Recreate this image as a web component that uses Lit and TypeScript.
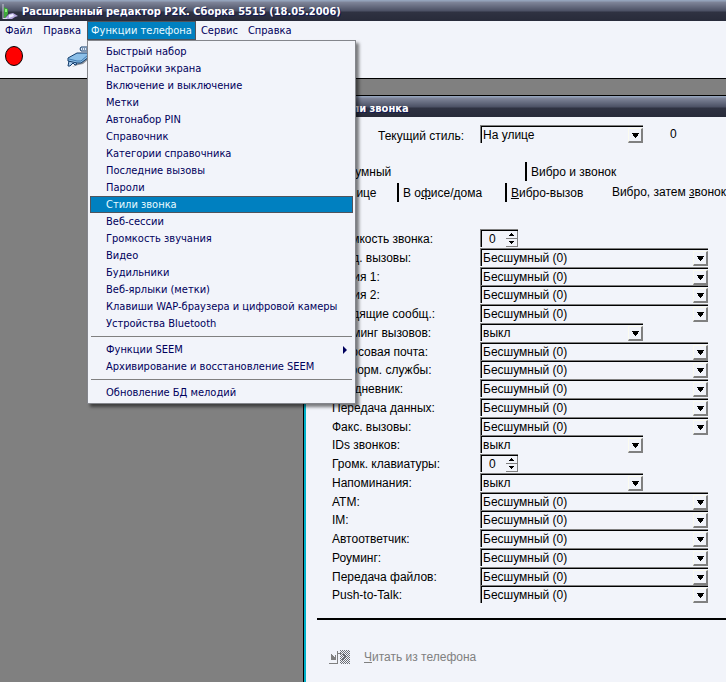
import { LitElement, html, css, nothing } from "lit";
import { customElement, property } from "lit/decorators.js";

type Row = { label: string; kind: "wide" | "short" | "spin" };

const SILENT = "Бесшумный (0)";

const ROWS: Row[] = [
  { label: "Громкость звонка:", kind: "spin" },
  { label: "Вход. вызовы:", kind: "wide" },
  { label: "Линия 1:", kind: "wide" },
  { label: "Линия 2:", kind: "wide" },
  { label: "Входящие сообщ.:", kind: "wide" },
  { label: "Тайминг вызовов:", kind: "short" },
  { label: "Голосовая почта:", kind: "wide" },
  { label: "Информ. службы:", kind: "wide" },
  { label: "Ежедневник:", kind: "wide" },
  { label: "Передача данных:", kind: "wide" },
  { label: "Факс. вызовы:", kind: "wide" },
  { label: "IDs звонков:", kind: "short" },
  { label: "Громк. клавиатуры:", kind: "spin" },
  { label: "Напоминания:", kind: "short" },
  { label: "ATM:", kind: "wide" },
  { label: "IM:", kind: "wide" },
  { label: "Автоответчик:", kind: "wide" },
  { label: "Роуминг:", kind: "wide" },
  { label: "Передача файлов:", kind: "wide" },
  { label: "Push-to-Talk:", kind: "wide" },
];

const MENU: (string | null)[] = [
  "Быстрый набор",
  "Настройки экрана",
  "Включение и выключение",
  "Метки",
  "Автонабор PIN",
  "Справочник",
  "Категории справочника",
  "Последние вызовы",
  "Пароли",
  "Стили звонка",
  "Веб-сессии",
  "Громкость звучания",
  "Видео",
  "Будильники",
  "Веб-ярлыки (метки)",
  "Клавиши WAP-браузера и цифровой камеры",
  "Устройства Bluetooth",
  null,
  "Функции SEEM",
  "Архивирование и восстановление SEEM",
  null,
  "Обновление БД мелодий",
];

@customElement("combo-box")
class ComboBox extends LitElement {
  @property() value = "";
  @property() label = "";

  static styles = css`
    :host {
      display: grid;
      height: 18px;
      box-sizing: border-box;
      border-top: 1px solid #808080;
      border-left: 1px solid #808080;
    }
    .field,
    .arrow {
      grid-area: 1 / 1;
    }
    .field {
      appearance: none;
      width: 100%;
      min-width: 0;
      height: 17px;
      margin: 0;
      padding: 0 18px 0 1px;
      border: 0 solid #000;
      border-width: 1px 0 0 1px;
      border-radius: 0;
      outline: 0;
      background: #f2f4fa;
      color: #000;
      font: 12px/16px "Liberation Sans", sans-serif;
    }
    .arrow {
      justify-self: end;
      align-self: end;
      width: 15px;
      height: 15px;
      box-sizing: border-box;
      border: 1px solid #fbfbf0;
      border-right: 2px solid #808080;
      border-bottom: 2px solid #808080;
      pointer-events: none;
    }
    .glyph {
      display: block;
    }
  `;

  render() {
    return html`
      <select class="field" aria-label=${this.label}>
        <option>${this.value}</option>
      </select>
      <span class="arrow">
        <svg class="glyph" width="12" height="12" shape-rendering="crispEdges">
          <path d="M3 4h7v1h-1v2h-1v1h-1v1h-1v-1h-1v-1h-1v-2h-1z" fill="#000" />
        </svg>
      </span>
    `;
  }
}

@customElement("spin-box")
class SpinBox extends LitElement {
  @property() label = "";

  static styles = css`
    :host {
      display: flex;
      height: 18px;
      box-sizing: border-box;
      border-top: 1px solid #808080;
      border-left: 1px solid #808080;
    }
    .value {
      flex: 1;
      min-width: 0;
      box-sizing: border-box;
      padding: 0 0 0 7px;
      border: 0 solid #000;
      border-width: 1px 0 0 1px;
      border-radius: 0;
      outline: 0;
      background: #f2f4fa;
      color: #000;
      font: 12px/16px "Liberation Sans", sans-serif;
    }
    .steps {
      display: flex;
      flex-direction: column;
      width: 12px;
      border-top: 1px solid #000;
    }
    .step {
      flex: 1;
      display: flex;
      align-items: center;
      justify-content: center;
      padding: 0;
      border: 0 solid #808080;
      border-width: 0 1px 1px 0;
      background: #f2f4fa;
    }
  `;

  render() {
    const step = (name: string, d: string) => html`
      <button class="step" aria-label=${name}>
        <svg width="5" height="3" shape-rendering="crispEdges"><path d=${d} /></svg>
      </button>
    `;
    return html`
      <input class="value" value="0" aria-label=${this.label} />
      <span class="steps">
        ${step("Больше", "M2 0h1v1h1v1h1v1h-5v-1h1v-1h1z")}
        ${step("Меньше", "M0 0h5v1h-1v1h-1v1h-1v-1h-1v-1h-1z")}
      </span>
    `;
  }
}

@customElement("app-root")
class AppRoot extends LitElement {
  static styles = css`
    :host {
      display: flex;
      flex-direction: column;
      min-height: 100vh;
      overflow: hidden;
      background: #808080;
      color: #000;
      font: 12px/16px "Liberation Sans", sans-serif;
    }
    .caption {
      display: flex;
      align-items: center;
      gap: 4px;
      box-sizing: border-box;
      height: 21px;
      padding: 2px 2px 0;
      background: linear-gradient(#94a3bb 0 1px, #80869a 2px, #4b5064 11px, #2f3242 12px, #282b3a);
      color: #fff;
      font: bold 11px/19px "DejaVu Sans Condensed", sans-serif;
      text-shadow: 1px 1px 0 #10185a;
      white-space: nowrap;
    }
    .menubar {
      display: flex;
      height: 19px;
      background: #f2f4fa;
      font: 11px/17px "DejaVu Sans Condensed", sans-serif;
    }
    .holder {
      position: relative;
    }
    .top,
    .item {
      font: inherit;
      color: #00005c;
      background: none;
      border: 1px solid transparent;
      white-space: nowrap;
      text-align: left;
    }
    .top {
      height: 19px;
      padding: 0 4px;
    }
    .top.before {
      padding-right: 5px;
    }
    .top.open {
      padding: 0 3px;
    }
    .top.open,
    .item.current {
      background: #0080c0;
      border-color: #50545c;
      color: #e8fbff;
    }
    .menu {
      position: absolute;
      top: 19px;
      left: 0;
      z-index: 2;
      box-sizing: border-box;
      width: 269px;
      padding: 2px;
      border: 1px solid #84868c;
      background: #f2f4fa;
      box-shadow: 3px 3px 3px rgba(0, 0, 0, 0.5);
    }
    .item {
      display: flex;
      align-items: center;
      justify-content: space-between;
      width: 100%;
      height: 17px;
      padding: 0 5px 0 15px;
      line-height: 15px;
    }
    .rule {
      height: 1px;
      margin: 4px 1px;
      border: 0;
      background: #808080;
    }
    .toolbar {
      display: flex;
      align-items: center;
      height: 39px;
      box-sizing: border-box;
      padding: 0 4px 6px;
      gap: 43px;
      background: #f2f4fa;
      border-bottom: 1px solid #000;
    }
    .tool {
      padding: 0;
      border: 0;
      background: none;
      line-height: 0;
    }
    .workspace {
      flex: 1;
      display: flex;
      padding: 16px 0 0 303px;
    }
    .child {
      flex: 1;
      min-width: 0;
      border-top: 1px solid #000;
      border-left: 1px solid #000;
      background: #f2f4fa;
      box-shadow: inset 2px 0 0 #00b0c8;
    }
    .child .caption {
      padding: 4px 0 0 28px;
    }
    .style-row {
      display: flex;
      align-items: center;
      margin-top: 7px;
      padding-left: 74px;
      white-space: nowrap;
    }
    .style-label {
      width: 102px;
      padding-top: 4px;
    }
    .style-row combo-box,
    .short {
      width: 163px;
    }
    .wide {
      width: 228px;
    }
    .spin {
      width: 38px;
    }
    .index {
      margin-left: 27px;
    }
    .tabs {
      display: flex;
      height: 21px;
      white-space: nowrap;
    }
    .tabs.first {
      margin-top: 18px;
    }
    .tab {
      box-sizing: border-box;
      height: 19px;
      padding: 0 0 0 4px;
      border: 0;
      background: none;
      font: inherit;
      color: inherit;
      text-align: left;
    }
    .tab.edge {
      border-left: 2px solid #000;
    }
    .t-a {
      width: 221px;
      padding-left: 21px;
    }
    .t-b {
      width: 93px;
      padding-left: 21px;
    }
    .t-c {
      width: 108px;
    }
    .t-d {
      width: 103px;
    }
    .t-e {
      height: 17px;
    }
    .settings {
      display: grid;
      grid-template-columns: 148px 1fr;
      grid-template-rows: repeat(20, 1fr);
      height: 375px;
      margin-top: 25px;
      padding-left: 28px;
      white-space: nowrap;
    }
    .name {
      padding-top: 2px;
    }
    .divider {
      height: 2px;
      margin: 14px 0 0 13px;
      border: 0;
      background: #000;
    }
    .read {
      display: flex;
      align-items: center;
      gap: 14px;
      margin: 29px 0 0 25px;
      padding: 0;
      border: 0;
      background: none;
      color: #808080;
      font: inherit;
    }
  `;

  private menuEntry(entry: string | null) {
    if (entry === null) return html`<hr class="rule" />`;
    return html`
      <button class="item ${entry === "Стили звонка" ? "current" : ""}" role="menuitem">
        ${entry}
        ${entry === "Функции SEEM"
          ? html`<svg width="4" height="8"><path d="M0 0l4 4l-4 4z" fill="#00005c" /></svg>`
          : nothing}
      </button>
    `;
  }

  private control(row: Row) {
    if (row.kind === "spin") return html`<spin-box class="spin" .label=${row.label}></spin-box>`;
    return html`<combo-box
      class=${row.kind}
      .label=${row.label}
      .value=${row.kind === "wide" ? SILENT : "выкл"}
    ></combo-box>`;
  }

  render() {
    return html`
      <header class="caption">
        <svg width="16" height="18" viewBox="0 0 16 18">
          <path d="M1 1v15" stroke="#c8ccd4" />
          <path d="M2 4l4 2v5l-3 4h-1z" fill="#3fa63a" />
          <path d="M3 6h2v3h-2z" fill="#8df07c" />
          <path d="M3 15l4-4 4-1 5 3-3 1-3 2h-6z" fill="#b3a6dc" />
          <path d="M7 12l4-1 1 2-5 2z" fill="#eef0ff" />
          <path d="M1 16h4v-1h-4z" fill="#d8dce4" />
        </svg>
        <span>Расширенный редактор P2K. Сборка 5515 (18.05.2006)</span>
      </header>
      <nav class="menubar">
        <button class="top before">Файл</button>
        <button class="top before">Правка</button>
        <div class="holder">
          <button class="top open">Функции телефона</button>
          <div class="menu" role="menu">${MENU.map((m) => this.menuEntry(m))}</div>
        </div>
        <button class="top">Сервис</button>
        <button class="top">Справка</button>
      </nav>
      <div class="toolbar">
        <button class="tool" aria-label="Состояние">
          <svg width="20" height="20">
            <ellipse cx="10" cy="10" rx="8.500" ry="9.500" fill="#f00" stroke="#000" />
          </svg>
        </button>
        <button class="tool" aria-label="Подключение">
          <svg width="24" height="24" viewBox="0 0 24 24">
            <path d="M5 23l6-2 5-1 7-6v-3l-5 4-8 5z" fill="#8a8f98" />
            <path d="M2 17l-1 5h2l3-3 2 2 2-1-2-3z" fill="#a9cdf0" stroke="#123c6c" />
            <path d="M1 14l9-5h12v4l-8 6h-4l-9-2z" fill="#8cbfe8" stroke="#123c6c" />
            <path d="M2 15l8 2h4l7-6" fill="none" stroke="#3d78b0" />
            <path d="M14 3h8v4h-8l-1-2z" fill="#dfeaf8" stroke="#123c6c" />
            <path d="M15 5h6" stroke="#123c6c" stroke-dasharray="1 1" />
          </svg>
        </button>
      </div>
      <main class="workspace">
        <section class="child">
          <div class="caption">Стили звонка</div>
          <div class="style-row">
            <span class="style-label">Текущий стиль:</span>
            <combo-box .label=${"Текущий стиль"} .value=${"На улице"}></combo-box>
            <span class="index">0</span>
          </div>
          <div class="tabs first">
            <button class="tab t-a">Бесшумный</button>
            <button class="tab edge">Вибро и звонок</button>
          </div>
          <div class="tabs">
            <button class="tab t-b">На улице</button>
            <button class="tab edge t-c">В о<u>ф</u>исе/дома</button>
            <button class="tab edge t-d"><u>В</u>ибро-вызов</button>
            <button class="tab t-e">Вибро, затем <u>з</u>вонок</button>
          </div>
          <div class="settings">
            ${ROWS.map((r) => html`<span class="name">${r.label}</span>${this.control(r)}`)}
          </div>
          <hr class="divider" />
          <button class="read" disabled>
            <svg width="21" height="16" shape-rendering="crispEdges">
              <defs>
                <pattern id="dither" width="2" height="2" patternUnits="userSpaceOnUse">
                  <path d="M0 0h1v1h-1zM1 1h1v1h-1z" fill="#6c6e74" />
                </pattern>
              </defs>
              <path d="M11 1h10v14h-10z" fill="url(#dither)" />
              <path
                d="M0 14h9v1h-9zM8 2h1v13h-1zM2 5h1v1h1v1h1v1h1v-2h1v5h-5zM9 4h4v1h-4z"
                fill="#808080"
              />
              <path d="M13 5h2v1h1v1h1v2h-1v1h-1v1h-2v-1h1v-1h1v-2h-1v-1h-1z" fill="#6c6e74" />
            </svg>
            <span><u>Ч</u>итать из телефона</span>
          </button>
        </section>
      </main>
    `;
  }
}
